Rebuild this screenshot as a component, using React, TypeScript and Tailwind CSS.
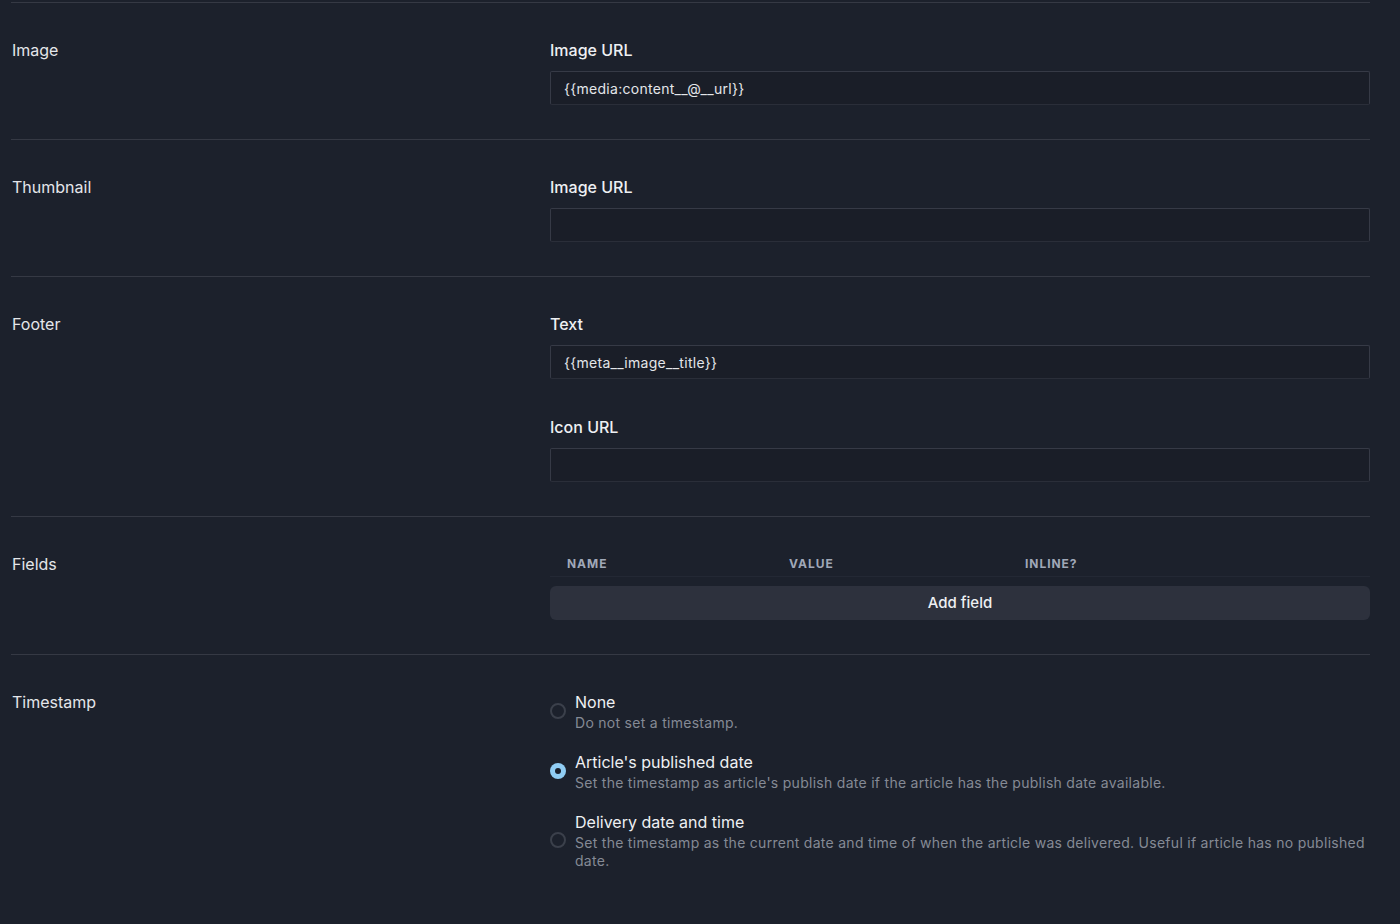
const font = { fontFamily: 'Inter, "Noto Sans", sans-serif' };

function TextInput({ value }: { value?: string }) {
  return (
    <div className="h-[34px] w-full rounded-[2px] border border-[#363a46] border-b-[#2a2e39] bg-[#1a1e28] px-[13px] flex items-center text-[14px] tracking-[0.02em] text-[#e4e6ea]">
      {value}
    </div>
  );
}

function Field({ label, value }: { label: string; value?: string }) {
  return (
    <div>
      <div className="text-[16px] leading-6 font-medium text-[#eef0f3] mb-[9px]">{label}</div>
      <TextInput value={value} />
    </div>
  );
}

function Section({ title, children }: { title: string; children: React.ReactNode }) {
  return (
    <div className="flex border-t border-[#353944] pt-[35px] pb-[34px]">
      <div className="w-[539px] shrink-0 text-[16px] leading-6 text-[#e4e6ea] pl-px">{title}</div>
      <div className="flex-1 min-w-0">{children}</div>
    </div>
  );
}

const options = [
  { title: 'None', desc: 'Do not set a timestamp.', checked: false },
  {
    title: "Article's published date",
    desc: "Set the timestamp as article's publish date if the article has the publish date available.",
    checked: true,
  },
  {
    title: 'Delivery date and time',
    desc: 'Set the timestamp as the current date and time of when the article was delivered. Useful if article has no published date.',
    checked: false,
  },
];

function Radio({ checked }: { checked: boolean }) {
  if (checked) {
    return (
      <div className="w-4 h-4 shrink-0 rounded-full bg-[#90cdf4] flex items-center justify-center">
        <div className="w-[6px] h-[6px] rounded-full bg-[#1a202c]" />
      </div>
    );
  }
  return <div className="w-4 h-4 shrink-0 rounded-full border-2 border-[#3b404b]" />;
}

export default function App() {
  return (
    <div className="min-h-[924px] bg-[#1c212c] pt-[2px]" style={font}>
      <div className="ml-[11px] w-[1359px]">
        <Section title="Image">
          <Field label="Image URL" value="{{media:content__@__url}}" />
        </Section>

        <Section title="Thumbnail">
          <Field label="Image URL" />
        </Section>

        <Section title="Footer">
          <div className="flex flex-col gap-[36px]">
            <Field label="Text" value="{{meta__image__title}}" />
            <Field label="Icon URL" />
          </div>
        </Section>

        <Section title="Fields">
          <div className="grid grid-cols-[222px_236px_1fr] border-b border-[#232834] h-[25px] items-start">
            {['Name', 'Value', 'Inline?'].map(h => (
              <div key={h} className="pl-[17px] text-[12px] leading-6 font-bold uppercase tracking-[0.08em] text-[#a0a8b8]">
                {h}
              </div>
            ))}
          </div>
          <button className="mt-[9px] w-full h-[34px] rounded-md bg-[#2d313d] text-[15px] font-medium text-[#eef0f3]">
            Add field
          </button>
        </Section>

        <Section title="Timestamp">
          <div className="flex flex-col gap-[18px]">
            {options.map(o => (
              <div key={o.title} className="flex items-center gap-[9px]">
                <Radio checked={o.checked} />
                <div>
                  <div className="text-[16px] leading-6 text-[#eef0f3]">{o.title}</div>
                  <div className="text-[14px] leading-[18px] text-[#858a95] tracking-[0.02em]">{o.desc}</div>
                </div>
              </div>
            ))}
          </div>
        </Section>
      </div>
    </div>
  );
}
